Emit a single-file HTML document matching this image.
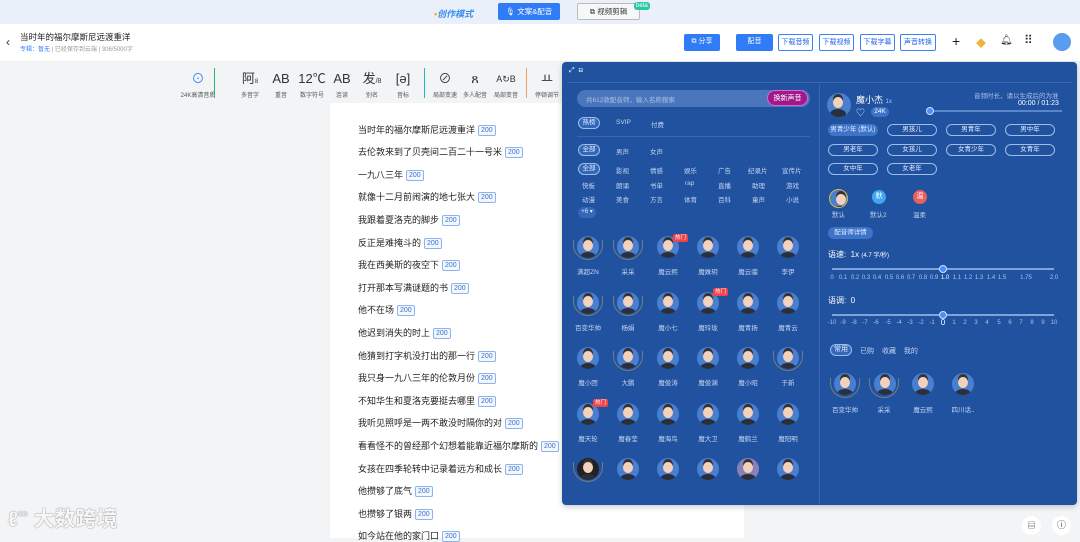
<!DOCTYPE html>
<html><head><meta charset="utf-8">
<style>
*{margin:0;padding:0;box-sizing:border-box}
body{width:1080px;height:538px;overflow:hidden;background:#f3f4f6;font-family:"Liberation Sans","Noto Sans CJK SC",sans-serif;position:relative;color:#333}
.a{position:absolute;white-space:nowrap}
.top{left:0;top:0;width:1080px;height:24px;background:#eaf0fa}
.hdr{left:0;top:24px;width:1080px;height:38px;background:#fff;border-bottom:1px solid #eee}
.btn{position:absolute;height:17px;font-size:7px;line-height:15px;text-align:center;border-radius:2px}
.ob{border:1px solid #3b82f6;color:#2563eb;background:#fff}
.fb{background:#2f7cf6;color:#fff}
.tool{position:absolute;top:70px;text-align:center;font-size:6px;color:#555;width:40px}
.tool b{display:block;font-size:13px;font-weight:normal;color:#333;height:20px;line-height:18px}
.paper{left:330px;top:103px;width:414px;height:435px;background:#fff}
.ln{position:absolute;left:358px;font-size:9px;color:#222;line-height:12px}
.ln i{font-style:normal;display:inline-block;border:1px solid #8db3ef;color:#3b6fc4;font-size:7px;line-height:9px;padding:0 2px;border-radius:2px;margin-left:3px;vertical-align:1px;background:#f3f7ff}
.panel{left:562px;top:62px;width:515px;height:443px;background:#2152a0;border-radius:4px;box-shadow:0 2px 6px rgba(0,0,0,.2)}
.t{position:absolute;font-size:6.5px;color:#c2d4f2;white-space:nowrap;text-align:center}
.pill{position:absolute;border:1px solid #9fbde8;border-radius:9px;font-size:6.5px;color:#e6efff;text-align:center;height:12px;line-height:10px}
.av{position:absolute;width:22px;height:22px;border-radius:50%;background:#4a7fd0;overflow:hidden}
.av:before{content:"";position:absolute;left:6px;top:4px;width:10px;height:11px;border-radius:50%;background:#f3d2bd;box-shadow:0 -3px 0 #333}
.av:after{content:"";position:absolute;left:3px;top:16px;width:16px;height:10px;border-radius:50% 50% 0 0;background:#2a2f3a}
.nm{position:absolute;font-size:6.5px;color:#c6d6f2;width:40px;text-align:center}
.hot{position:absolute;background:#f0434a;color:#fff;font-size:5.5px;padding:0 2px;border-radius:2px;line-height:8px}
.lr{position:absolute;width:30px;height:20px;border:1.5px solid #a99a6a;border-top:none;border-radius:0 0 15px 15px;opacity:.6}
.sl{position:absolute;height:2px;background:#7fa4dc}
.k{position:absolute;width:14px;text-align:center;font-size:6px;color:#a9c1e6}
</style></head><body>
<div class="a top"></div>
<div class="a" style="left:434px;top:7px;font-size:9px;color:#3b8bf0;font-style:italic;font-weight:bold"><span style="color:#f5b020">•</span>创作模式</div>
<div class="btn fb" style="left:498px;top:3px;width:62px;height:17px;font-size:7.5px;line-height:17px">🎙 文案&amp;配音</div>
<div class="btn" style="left:577px;top:3px;width:63px;height:17px;border:1px solid #bbb;color:#333;background:#f6f7f9;font-size:7.5px;line-height:15px">⧉ 视频剪辑</div>
<div class="a" style="left:634px;top:2px;background:#2dc7a7;color:#fff;font-size:6px;padding:0 2px;border-radius:3px;line-height:8px">beta</div>

<div class="a hdr"></div>
<div class="a" style="left:6px;top:35px;font-size:12px;color:#333">‹</div>
<div class="a" style="left:20px;top:31px;font-size:8.5px;color:#222">当时年的福尔摩斯尼远渡重洋</div>
<div class="a" style="left:20px;top:44px;font-size:6px;color:#999"><span style="color:#3b82f6">专辑：暂无</span> | 已经保存到云端 | 306/5000字</div>
<div class="btn fb" style="left:684px;top:34px;width:36px">⧉ 分享</div>
<div class="btn fb" style="left:736px;top:34px;width:37px">配音</div>
<div class="btn ob" style="left:778px;top:34px;width:35px">下载音频</div>
<div class="btn ob" style="left:819px;top:34px;width:35px">下载视频</div>
<div class="btn ob" style="left:860px;top:34px;width:35px">下载字幕</div>
<div class="btn ob" style="left:900px;top:34px;width:36px">声音转换</div>
<div class="a" style="left:952px;top:33px;font-size:14px;color:#222">+</div>
<div class="a" style="left:976px;top:35px;font-size:10px;color:#f0b23a">◆</div>
<div class="a" style="left:1000px;top:35px;font-size:10px;color:#333">🔔︎</div>
<div class="a" style="left:1024px;top:33px;font-size:12px;color:#222;letter-spacing:-1px">⠿</div>
<div class="a" style="left:1053px;top:33px;width:18px;height:18px;border-radius:50%;background:#5a9cf0"></div>

<div class="tool" style="left:178px"><b style="color:#3b82f6">⊙</b>24K高清音质</div>
<div class="a" style="left:214px;top:68px;width:1px;height:30px;background:#2bb673"></div>
<div class="tool" style="left:230px"><b>阿<small style="font-size:6px">8</small></b>多音字</div>
<div class="tool" style="left:261px"><b>AB</b>重音</div>
<div class="tool" style="left:292px"><b>12℃</b>数字符号</div>
<div class="tool" style="left:322px"><b>AB</b>连读</div>
<div class="tool" style="left:352px"><b>发<small style="font-size:7px">/8</small></b>别名</div>
<div class="tool" style="left:383px"><b>[ə]</b>音标</div>
<div class="a" style="left:424px;top:68px;width:1px;height:30px;background:#2bb6c0"></div>
<div class="tool" style="left:425px"><b>⊘</b>局部变速</div>
<div class="tool" style="left:455px"><b>ጸ</b>多人配音</div>
<div class="tool" style="left:486px"><b style="font-size:9px">A↻B</b>局部变音</div>
<div class="a" style="left:526px;top:68px;width:1px;height:30px;background:#f0a060"></div>
<div class="tool" style="left:527px"><b>ㅛ</b>停顿调节</div>

<div class="a paper"></div>
<div class="ln" style="top:124px">当时年的福尔摩斯尼远渡重洋<i>200</i></div>
<div class="ln" style="top:146px">去伦敦来到了贝壳间二百二十一号米<i>200</i></div>
<div class="ln" style="top:169px">一九八三年<i>200</i></div>
<div class="ln" style="top:191px">就像十二月前闹演的地七张大<i>200</i></div>
<div class="ln" style="top:214px">我跟着夏洛克的脚步<i>200</i></div>
<div class="ln" style="top:237px">反正是难掩斗的<i>200</i></div>
<div class="ln" style="top:259px">我在西美斯的夜空下<i>200</i></div>
<div class="ln" style="top:282px">打开那本写满谜题的书<i>200</i></div>
<div class="ln" style="top:304px">他不在场<i>200</i></div>
<div class="ln" style="top:327px">他迟到消失的时上<i>200</i></div>
<div class="ln" style="top:350px">他猜到打字机没打出的那一行<i>200</i></div>
<div class="ln" style="top:372px">我只身一九八三年的伦敦月份<i>200</i></div>
<div class="ln" style="top:395px">不知华生和夏洛克要挺去哪里<i>200</i></div>
<div class="ln" style="top:417px">我听见照呼是一两不敢没时隔你的对<i>200</i></div>
<div class="ln" style="top:440px">看看怪不的曾经那个幻想着能靠近福尔摩斯的<i>200</i></div>
<div class="ln" style="top:463px">女孩在四季轮转中记录着远方和成长<i>200</i></div>
<div class="ln" style="top:485px">他攒够了底气<i>200</i></div>
<div class="ln" style="top:508px">也攒够了银两<i>200</i></div>
<div class="ln" style="top:530px">如今站在他的家门口<i>200</i></div>

<div class="a" style="left:8px;top:503px;font-size:21px;color:#f6f6f6;text-shadow:0 0 1px #888,0 0 1px #888;font-weight:bold">ℓ<sup style="font-size:9px">ᴼᴼ</sup> 大数跨境</div>

<div class="a panel"></div>
<div class="a" style="left:569px;top:67px;font-size:7px;color:#fff">⤢ &nbsp;⊟</div>
<div class="a" style="left:567px;top:82px;width:505px;height:1px;background:#3a68b0"></div>
<div class="a" style="left:819px;top:84px;width:1px;height:420px;background:#3a68b0"></div>
<div class="a" style="left:577px;top:90px;width:233px;height:17px;border-radius:9px;background:#4a76bb"></div>
<div class="a" style="left:586px;top:94px;font-size:6.5px;color:#a9c1e6">共612款配音师，输入名称搜索</div>
<div class="a" style="left:767px;top:90px;width:41px;height:16px;border-radius:8px;background:#a0198a;color:#fff;font-size:7px;text-align:center;line-height:16px;border:1px solid #d26bd0">换新声音</div>
<div class="pill" style="left:578px;top:117px;width:22px;background:#3567b8">热榜</div>
<div class="t" style="left:616px;top:119px">SVIP</div><div class="t" style="left:651px;top:119px">付费</div>
<div class="a" style="left:577px;top:136px;width:233px;height:1px;background:#3a68b0"></div>
<div class="pill" style="left:578px;top:144px;width:22px;background:#3567b8">全部</div>
<div class="t" style="left:616px;top:146px">男声</div><div class="t" style="left:650px;top:146px">女声</div>
<div class="pill" style="left:578px;top:163px;width:22px;background:#3567b8">全部</div>
<div class="t" style="left:616px;top:165px">影视</div><div class="t" style="left:650px;top:165px">情感</div><div class="t" style="left:684px;top:165px">娱乐</div><div class="t" style="left:718px;top:165px">广告</div><div class="t" style="left:748px;top:165px">纪录片</div><div class="t" style="left:782px;top:165px">宣传片</div>
<div class="t" style="left:582px;top:180px">快板</div><div class="t" style="left:616px;top:180px">朗诵</div><div class="t" style="left:650px;top:180px">书单</div><div class="t" style="left:685px;top:180px">rap</div><div class="t" style="left:718px;top:180px">直播</div><div class="t" style="left:752px;top:180px">助理</div><div class="t" style="left:786px;top:180px">游戏</div>
<div class="t" style="left:582px;top:194px">动漫</div><div class="t" style="left:616px;top:194px">美食</div><div class="t" style="left:650px;top:194px">方言</div><div class="t" style="left:684px;top:194px">体育</div><div class="t" style="left:718px;top:194px">百科</div><div class="t" style="left:752px;top:194px">童声</div><div class="t" style="left:786px;top:194px">小说</div>
<div class="a" style="left:578px;top:207px;width:18px;height:11px;border-radius:6px;background:#3567b8;font-size:6px;color:#dce8ff;text-align:center;line-height:11px">+6 ▾</div>

<div class="av" style="left:577px;top:236px"></div><div class="av" style="left:617px;top:236px"></div><div class="av" style="left:657px;top:236px"></div><div class="av" style="left:697px;top:236px"></div><div class="av" style="left:737px;top:236px"></div><div class="av" style="left:777px;top:236px"></div>
<div class="lr" style="left:573px;top:240px"></div><div class="lr" style="left:613px;top:240px"></div>
<div class="hot" style="left:673px;top:234px">热门</div>
<div class="nm" style="left:568px;top:266px">满超ZN</div><div class="nm" style="left:608px;top:266px">采采</div><div class="nm" style="left:648px;top:266px">魔云熙</div><div class="nm" style="left:688px;top:266px">魔姝玥</div><div class="nm" style="left:728px;top:266px">魔云骝</div><div class="nm" style="left:768px;top:266px">李伊</div>

<div class="av" style="left:577px;top:292px"></div><div class="av" style="left:617px;top:292px"></div><div class="av" style="left:657px;top:292px"></div><div class="av" style="left:697px;top:292px"></div><div class="av" style="left:737px;top:292px"></div><div class="av" style="left:777px;top:292px"></div>
<div class="lr" style="left:573px;top:296px"></div><div class="lr" style="left:613px;top:296px"></div>
<div class="hot" style="left:713px;top:288px">热门</div>
<div class="nm" style="left:568px;top:322px">百变华帅</div><div class="nm" style="left:608px;top:322px">杨娟</div><div class="nm" style="left:648px;top:322px">魔小七</div><div class="nm" style="left:688px;top:322px">魔玲珑</div><div class="nm" style="left:728px;top:322px">魔青扬</div><div class="nm" style="left:768px;top:322px">魔青云</div>

<div class="av" style="left:577px;top:347px"></div><div class="av" style="left:617px;top:347px"></div><div class="av" style="left:657px;top:347px"></div><div class="av" style="left:697px;top:347px"></div><div class="av" style="left:737px;top:347px"></div><div class="av" style="left:777px;top:347px"></div>
<div class="lr" style="left:613px;top:351px"></div><div class="lr" style="left:773px;top:351px"></div>
<div class="nm" style="left:568px;top:377px">魔小团</div><div class="nm" style="left:608px;top:377px">大鹏</div><div class="nm" style="left:648px;top:377px">魔俊涛</div><div class="nm" style="left:688px;top:377px">魔俊渊</div><div class="nm" style="left:728px;top:377px">魔小昭</div><div class="nm" style="left:768px;top:377px">于新</div>

<div class="av" style="left:577px;top:403px"></div><div class="av" style="left:617px;top:403px"></div><div class="av" style="left:657px;top:403px"></div><div class="av" style="left:697px;top:403px"></div><div class="av" style="left:737px;top:403px"></div><div class="av" style="left:777px;top:403px"></div>
<div class="hot" style="left:593px;top:399px">热门</div>
<div class="nm" style="left:568px;top:433px">魔天轮</div><div class="nm" style="left:608px;top:433px">魔春莹</div><div class="nm" style="left:648px;top:433px">魔海鸟</div><div class="nm" style="left:688px;top:433px">魔大卫</div><div class="nm" style="left:728px;top:433px">魔鹤兰</div><div class="nm" style="left:768px;top:433px">魔阳明</div>

<div class="av" style="left:577px;top:458px;background:#222"></div><div class="av" style="left:617px;top:458px"></div><div class="av" style="left:657px;top:458px"></div><div class="av" style="left:697px;top:458px"></div><div class="av" style="left:737px;top:458px;background:#8a7fb8"></div><div class="av" style="left:777px;top:458px"></div>
<div class="lr" style="left:573px;top:462px"></div>

<div class="av" style="left:827px;top:93px;width:24px;height:24px"></div>
<div class="a" style="left:856px;top:93px;font-size:9px;color:#fff">魔小杰 <span style="font-size:6px;color:#a9c1e6">1x</span></div>
<div class="a" style="left:856px;top:106px;font-size:9px;color:#cfe0ff">♡</div>
<div class="a" style="left:871px;top:107px;width:18px;height:10px;background:#3d74c8;border-radius:5px;font-size:6.5px;color:#fff;text-align:center;line-height:10px">24K</div>
<div class="a" style="left:974px;top:90px;font-size:6.5px;color:#a9c1e6">音频时长，请以生成后的为准</div>
<div class="a" style="left:1018px;top:100px;font-size:7px;color:#fff">00:00 / 01:23</div>
<div class="sl" style="left:930px;top:110px;width:132px;background:#5a85c8"></div>
<div class="a" style="left:926px;top:107px;width:8px;height:8px;border-radius:50%;background:#4a90f5;border:1px solid #cfe0ff"></div>

<div class="pill" style="left:828px;top:124px;width:50px;background:#3d74c8;border-color:#3d74c8">男青少年 (默认)</div>
<div class="pill" style="left:887px;top:124px;width:50px">男孩儿</div><div class="pill" style="left:946px;top:124px;width:50px">男青年</div><div class="pill" style="left:1005px;top:124px;width:50px">男中年</div>
<div class="pill" style="left:828px;top:144px;width:50px">男老年</div><div class="pill" style="left:887px;top:144px;width:50px">女孩儿</div><div class="pill" style="left:946px;top:144px;width:50px">女青少年</div><div class="pill" style="left:1005px;top:144px;width:50px">女青年</div>
<div class="pill" style="left:828px;top:163px;width:50px">女中年</div><div class="pill" style="left:887px;top:163px;width:50px">女老年</div>

<div class="av" style="left:829px;top:189px;width:19px;height:19px;border:1px solid #d9b640"></div>
<div class="a" style="left:872px;top:190px;width:14px;height:14px;border-radius:50%;background:#3ea6f2;color:#fff;font-size:7px;text-align:center;line-height:14px">默</div>
<div class="a" style="left:913px;top:190px;width:14px;height:14px;border-radius:50%;background:#ec5f5f;color:#fff;font-size:7px;text-align:center;line-height:14px">温</div>
<div class="t" style="left:832px;top:209px">默认</div><div class="t" style="left:870px;top:209px">默认2</div><div class="t" style="left:913px;top:209px">温柔</div>
<div class="a" style="left:828px;top:227px;width:45px;height:12px;background:#3d74c8;border-radius:6px;font-size:6.5px;color:#e6efff;text-align:center;line-height:12px">配音师详情</div>

<div class="a" style="left:828px;top:249px;font-size:8px;color:#fff">语速: &nbsp;1x <span style="font-size:6px">(4.7 字/秒)</span></div>
<div class="sl" style="left:832px;top:268px;width:222px"></div>
<div class="a" style="left:939px;top:265px;width:8px;height:8px;border-radius:50%;background:#4a90f5;border:1px solid #cfe0ff"></div>
<div class="k" style="left:825px;top:275px">0</div><div class="k" style="left:836px;top:275px">0.1</div><div class="k" style="left:848px;top:275px">0.2</div><div class="k" style="left:859px;top:275px">0.3</div><div class="k" style="left:870px;top:275px">0.4</div><div class="k" style="left:882px;top:275px">0.5</div><div class="k" style="left:893px;top:275px">0.6</div><div class="k" style="left:904px;top:275px">0.7</div><div class="k" style="left:916px;top:275px">0.8</div><div class="k" style="left:927px;top:275px">0.9</div><div class="k" style="left:938px;top:275px;color:#fff">1.0</div><div class="k" style="left:950px;top:275px">1.1</div><div class="k" style="left:961px;top:275px">1.2</div><div class="k" style="left:972px;top:275px">1.3</div><div class="k" style="left:984px;top:275px">1.4</div><div class="k" style="left:995px;top:275px">1.5</div><div class="k" style="left:1019px;top:275px">1.75</div><div class="k" style="left:1047px;top:275px">2.0</div>

<div class="a" style="left:828px;top:295px;font-size:8px;color:#fff">语调: &nbsp;0</div>
<div class="sl" style="left:832px;top:314px;width:222px"></div>
<div class="a" style="left:939px;top:311px;width:8px;height:8px;border-radius:50%;background:#4a90f5;border:1px solid #cfe0ff"></div>
<div class="k" style="left:825px;top:320px">-10</div><div class="k" style="left:836px;top:320px">-9</div><div class="k" style="left:847px;top:320px">-8</div><div class="k" style="left:858px;top:320px">-7</div><div class="k" style="left:869px;top:320px">-6</div><div class="k" style="left:881px;top:320px">-5</div><div class="k" style="left:892px;top:320px">-4</div><div class="k" style="left:903px;top:320px">-3</div><div class="k" style="left:914px;top:320px">-2</div><div class="k" style="left:925px;top:320px">-1</div><div class="k" style="left:936px;top:318px;color:#fff;font-size:8px">0</div><div class="k" style="left:947px;top:320px">1</div><div class="k" style="left:958px;top:320px">2</div><div class="k" style="left:969px;top:320px">3</div><div class="k" style="left:980px;top:320px">4</div><div class="k" style="left:992px;top:320px">5</div><div class="k" style="left:1003px;top:320px">6</div><div class="k" style="left:1014px;top:320px">7</div><div class="k" style="left:1025px;top:320px">8</div><div class="k" style="left:1036px;top:320px">9</div><div class="k" style="left:1047px;top:320px">10</div>

<div class="pill" style="left:830px;top:344px;width:22px;background:#3567b8;font-size:7px">常用</div>
<div class="a" style="left:860px;top:346px;font-size:7px;color:#c2d4f2;word-spacing:6px">已购 收藏 我的</div>
<div class="av" style="left:834px;top:373px"></div><div class="av" style="left:874px;top:373px"></div><div class="av" style="left:912px;top:373px"></div><div class="av" style="left:952px;top:373px"></div>
<div class="lr" style="left:830px;top:378px"></div><div class="lr" style="left:869px;top:378px"></div>
<div class="nm" style="left:825px;top:404px">百变华帅</div><div class="nm" style="left:864px;top:404px">采采</div><div class="nm" style="left:903px;top:404px">魔云熙</div><div class="nm" style="left:943px;top:404px">四川话..</div>

<div class="a" style="left:1022px;top:516px;width:19px;height:19px;border-radius:50%;background:#fff;font-size:8px;text-align:center;line-height:19px">▤</div>
<div class="a" style="left:1052px;top:516px;width:19px;height:19px;border-radius:50%;background:#fff;font-size:9px;text-align:center;line-height:19px">ⓘ</div>
</body></html>
